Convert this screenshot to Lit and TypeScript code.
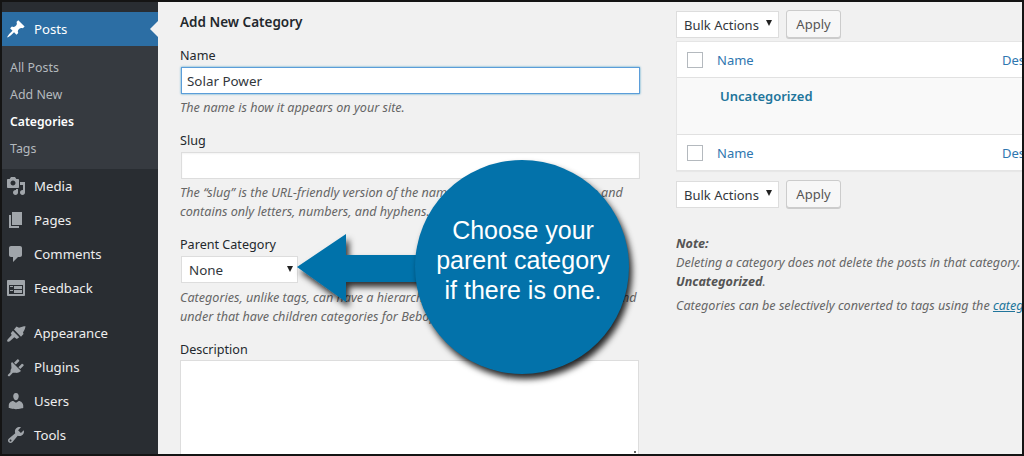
import { LitElement, html, css, svg } from "lit";
import { customElement } from "lit/decorators.js";

const ICONS: Record<string, string> = {
  posts: "M10.44 3.02l1.82-1.82 6.36 6.35-1.83 1.82c-1.05-.68-2.48-.57-3.41.36l-.75.75c-.92.93-1.04 2.35-.35 3.41l-1.83 1.82-2.41-2.41-2.8 2.79c-.42.42-3.38 2.71-3.8 2.29s1.86-3.39 2.28-3.81l2.79-2.79L4.1 9.36l1.83-1.82c1.05.69 2.48.57 3.4-.36l.75-.75c.93-.92 1.05-2.35.36-3.41z",
  media: "M13 11V4c0-.55-.45-1-1-1h-1.67L9 1H5L3.67 3H2c-.55 0-1 .45-1 1v7c0 .55.45 1 1 1h10c.55 0 1-.45 1-1zM7 4.5c1.38 0 2.5 1.12 2.5 2.5S8.38 9.5 7 9.5 4.5 8.38 4.5 7 5.62 4.5 7 4.5zM14 6h5v10.5c0 1.38-1.12 2.5-2.5 2.5S14 17.88 14 16.5s1.12-2.5 2.5-2.5c.17 0 .34.02.5.05V9h-3V6zm-4 8.05V13h2v3.5c0 1.38-1.12 2.5-2.5 2.5S7 17.88 7 16.5 8.12 14 9.5 14c.17 0 .34.02.5.05z",
  pages: "M6 15V2h10v13H6zm-1 1h8v2H3V5h2v11z",
  comments: "M5 2h9c1.1 0 2 .9 2 2v7c0 1.1-.9 2-2 2h-2l-5 5v-5H5c-1.1 0-2-.9-2-2V4c0-1.1.9-2 2-2z",
  feedback: "M2 2h16c.55 0 1 .45 1 1v14c0 .55-.45 1-1 1H2c-.55 0-1-.45-1-1V3c0-.55.45-1 1-1zm15 14V7H3v9h14zM4 8v1h3V8H4zm4 0v3h8V8H8zm-4 4v1h3v-1H4zm4 0v3h8v-3H8z",
  appearance: "M8 6.500 L10.500 3.500 L13 4.800 C15 3.800 17.500 3.200 19.500 3.200 C19.200 5.500 18.300 7.800 17 9.300 L17.500 11 L15 13.700 L8 6.500zM6.800 7.800 L13.300 14.300 L10.800 16 L8.300 14.300 L3.800 18.300 C2.800 19.100 1.800 18.800 1.200 18.200 C1 17.600 1.200 16.900 1.800 16.200 L5.700 12 L4.800 10.200 Z",
  plugins: "M13.11 4.36L9.87 7.6 8 5.73l3.24-3.24c.35-.34 1.05-.2 1.56.32.52.51.66 1.21.31 1.55zm-8 1.77l.91-1.12 9.01 9.01-1.19.84c-.71.71-2.63 1.16-3.82 1H6.85l-3.33 3.33c-.23.23-.92.23-1.35-.2-.43-.43-.43-1.12-.2-1.35l2.5-2.5c-.16-1.19.29-3.11 1-3.82zm12.4 2.63L14.27 12 12.4 10.13l3.24-3.24c.34-.35 1.04-.21 1.55.31.52.51.66 1.21.32 1.56z",
  users: "M10 9.25c-2.27 0-2.73-3.44-2.73-3.44C7 4.02 7.82 2 9.97 2c2.16 0 2.98 2.02 2.71 3.81 0 0-.41 3.44-2.68 3.44zm0 2.57L12.72 10c2.39 0 4.52 2.33 4.52 4.53v2.49s-3.65 1.13-7.24 1.13c-3.65 0-7.24-1.13-7.24-1.13v-2.49c0-2.25 1.94-4.48 4.47-4.48z",
  tools: "M16.68 9.77c-1.34 1.34-3.3 1.67-4.95.99l-5.41 6.52c-.99.99-2.59.99-3.58 0s-.99-2.59 0-3.57l6.52-5.42c-.68-1.65-.35-3.61.99-4.95 1.28-1.28 3.12-1.62 4.72-1.06l-2.89 2.89 2.82 2.82 2.86-2.86c.53 1.58.18 3.39-1.08 4.64zM3.81 16.21c.4.39 1.04.39 1.43 0 .4-.4.4-1.04 0-1.44-.39-.39-1.03-.39-1.43 0-.39.4-.39 1.04 0 1.44z",
};

const icon = (name: string) =>
  html`<svg class="ico" viewBox="0 0 20 20" width="20" height="20">${svg`<path fill="currentColor" d=${ICONS[name]}></path>`}</svg>`;

const menuA = [["media", "Media"], ["pages", "Pages"], ["comments", "Comments"], ["feedback", "Feedback"]];
const menuB = [["appearance", "Appearance"], ["plugins", "Plugins"], ["users", "Users"], ["tools", "Tools"]];

@customElement("app-root")
export class AppRoot extends LitElement {
  static styles = css`
    :host {
      display: block;
      width: 1024px;
      height: 456px;
      box-sizing: border-box;
      border: 2px solid #141414;
      overflow: hidden;
      position: relative;
      background: #f1f1f1;
      font-family: "Noto Sans", "Open Sans", sans-serif;
      font-size: 12.6px;
      color: #32373c;
    }
    .layout { display: flex; height: 452px; }
    .side { width: 156px; flex: none; background: #292d32; padding-top: 10px; color: #eee; font-size: 13.2px; }
    .item { display: flex; align-items: center; height: 34px; padding-left: 4px; gap: 8px; position: relative; }
    .item .ico { color: #a0a5aa; flex: none; }
    .item.cur { background: #2c6ea4; color: #fff; }
    .item.cur .ico { color: #fff; }
    .item.cur::after {
      content: "";
      position: absolute;
      right: 0;
      top: 9px;
      border: 8px solid transparent;
      border-left: 0;
      border-right-color: #f1f1f1;
    }
    .sub { background: #363a40; padding: 8px 0 7px; }
    .sub div { height: 27px; line-height: 27px; padding-left: 8px; color: #b4b9be; font-size: 12.4px; }
    .sub div.on { color: #fff; font-weight: 600; font-size: 12.2px; }
    .sep { height: 11px; }

    .main { flex: none; width: 866px; display: flex; overflow: hidden; }
    .form { width: 460px; flex: none; margin-left: 22px; }
    .form h2 { margin: 10px 0 14px; font-size: 13.5px; line-height: 20px; font-weight: 600; color: #23282d; }
    .group { margin-bottom: 14px; }
    label { display: block; line-height: 20px; color: #23282d; }
    .field { display: block; box-sizing: border-box; margin: 1px 0 0 1px; height: 27px; width: 459px; background: #fff; border: 1px solid #ddd; padding: 1px 5px 0; line-height: 25px; font-size: 13.4px; color: #32373c; box-shadow: inset 0 1px 2px rgba(0,0,0,.05); }
    .field.focus { border-color: #5b9dd9; box-shadow: 0 0 2px rgba(30,140,190,.8); }
    .help { margin: 4px 0 0; font-style: italic; color: #666; line-height: 19px; white-space: nowrap; }
    .help.wide { margin-top: 5px; }
    .sel { box-sizing: border-box; background: #fff; border: 1px solid #ddd; height: 27px; display: flex; align-items: center; justify-content: space-between; padding: 1px 4px 0 7px; font-size: 13.4px; color: #32373c; }
    .sel i { width: 0; height: 0; border: 3.5px solid transparent; border-top: 6px solid #222; border-bottom: 0; margin-top: -3px; }
    .parent { width: 117px; margin: 1px 0 0 1px; }
    .area { height: 110px; width: 459px; box-sizing: border-box; margin: 0; background: #fff; border: 1px solid #ddd; position: relative; }
    .area::after { content: ""; position: absolute; top: 90px; right: 2px; width: 2px; height: 2px; background: #666; }

    .right { margin-left: 36px; flex: 1; min-width: 0; overflow: hidden; }
    .bulk { display: flex; align-items: center; gap: 7px; height: 28px; }
    .bulk .sel { width: 103px; font-size: 13px; padding-left: 7px; padding-right: 6px; }
    .bulk button { box-sizing: border-box; width: 55px; height: 28px; font: inherit; font-size: 13px; color: #555; background: #f7f7f7; border: 1px solid #ccc; border-radius: 3px; box-shadow: 0 1px 0 #ccc; padding: 0; }
    .top { margin-top: 8px; }
    .table { margin-top: 3px; background: #fff; border: 1px solid #e5e5e5; border-right: 0; box-shadow: 0 1px 1px rgba(0,0,0,.04); }
    .row { display: flex; align-items: center; height: 35px; color: #2f77b0; font-size: 13px; white-space: nowrap; }
    .row.body { height: 56px; align-items: flex-start; background: #f9f9f9; border-top: 1px solid #e1e1e1; border-bottom: 1px solid #e1e1e1; }
    .cb { box-sizing: border-box; width: 16px; height: 16px; border: 1px solid #b4b9be; background: #fff; margin: 0 14px 0 10px; flex: none; }
    .nm { width: 285px; flex: none; }
    .title { margin: 9px 0 0 43px; color: #21759b; font-weight: 600; line-height: 19px; font-size: 13px; }
    .bottom { margin-top: 9px; }
    .note { margin: 0; padding-top: 26px; font-style: italic; color: #666; line-height: 19px; white-space: nowrap; }
    .note2 { margin: 5px 0 0; font-style: italic; color: #666; line-height: 19px; white-space: nowrap; }
    .note b { color: #555; }
    .note2 a { color: #21759b; text-decoration: underline; }

    .arrow { position: absolute; left: 0; top: 0; pointer-events: none; }
    .bubble { position: absolute; left: 413px; top: 158px; width: 214px; height: 214px; border-radius: 50%; background: #0372aa; box-shadow: 3px 5px 6px rgba(0,0,0,.85); }
    .bubble p { margin: 0; padding: 55px 0 0 2px; text-align: center; color: #fff; font-family: "Liberation Sans", Arial, sans-serif; font-size: 25px; line-height: 30px; }
  `;

  private bulk(cls: string) {
    return html`<div class="bulk ${cls}"><div class="sel">Bulk Actions<i></i></div><button>Apply</button></div>`;
  }

  render() {
    return html`
      <div class="layout">
        <nav class="side">
          <div class="item cur">${icon("posts")}<span>Posts</span></div>
          <div class="sub">
            <div>All Posts</div><div>Add New</div><div class="on">Categories</div><div>Tags</div>
          </div>
          ${menuA.map(([i, t]) => html`<div class="item">${icon(i)}<span>${t}</span></div>`)}
          <div class="sep"></div>
          ${menuB.map(([i, t]) => html`<div class="item">${icon(i)}<span>${t}</span></div>`)}
        </nav>
        <div class="main">
          <section class="form">
            <h2>Add New Category</h2>
            <div class="group">
              <label>Name</label>
              <div class="field focus">Solar Power</div>
              <p class="help">The name is how it appears on your site.</p>
            </div>
            <div class="group">
              <label>Slug</label>
              <div class="field"></div>
              <p class="help">The “slug” is the URL-friendly version of the name. It is usually all lowercase and<br />contains only letters, numbers, and hyphens.</p>
            </div>
            <div class="group">
              <label>Parent Category</label>
              <div class="sel parent">None<i></i></div>
              <p class="help wide">Categories, unlike tags, can have a hierarchy. You might have a Jazz category, and<br />under that have children categories for Bebop and Big Band. Totally optional.</p>
            </div>
            <div class="group">
              <label>Description</label>
              <div class="area"></div>
            </div>
          </section>
          <section class="right">
            ${this.bulk("top")}
            <div class="table">
              <div class="row"><span class="cb"></span><span class="nm">Name</span><span>Description</span></div>
              <div class="row body"><div class="title">Uncategorized</div></div>
              <div class="row"><span class="cb"></span><span class="nm">Name</span><span>Description</span></div>
            </div>
            ${this.bulk("bottom")}
            <p class="note"><b>Note:</b><br />Deleting a category does not delete the posts in that category. Instead, posts that were only assigned<br /><b>Uncategorized</b>.</p>
            <p class="note2">Categories can be selectively converted to tags using the <a>category to tag converter</a>.</p>
          </section>
        </div>
      </div>
      <svg class="arrow" width="1020" height="452" viewBox="0 0 1020 452">
        <defs><filter id="s" x="-20%" y="-30%" width="140%" height="170%"><feDropShadow dx="3" dy="5" stdDeviation="3" flood-color="#000" flood-opacity=".8"></feDropShadow></filter></defs>
        <path d="M295 265 L344 232 V253 H430 V280 H344 V300 Z" fill="#0372aa" filter="url(#s)"></path>
      </svg>
      <div class="bubble"><p>Choose your<br />parent category<br />if there is one.</p></div>
    `;
  }
}
